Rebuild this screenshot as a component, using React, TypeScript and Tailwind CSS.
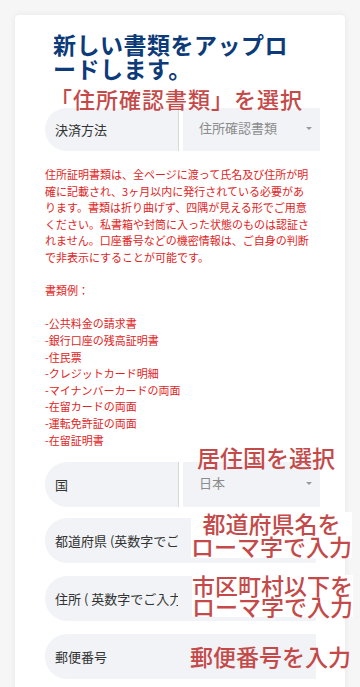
import React from "react";

const font = { fontFamily: '"Noto Sans CJK JP", "Noto Sans", sans-serif' };

function SelectRow({ label, value, h }: { label: string; value: string; h: string }) {
  return (
    <div className={`flex w-[275px] ${h}`}>
      <div className="flex w-[134px] items-center rounded-l-[22px] border-r border-[#d8d8d8] bg-[#f1f3f7] pl-[10px] text-[13px] text-[#333]">
        {label}
      </div>
      <div className="ml-[4px] flex flex-1 items-center justify-between bg-[#f1f3f7] pl-[16px] pr-[8px] text-[13px] text-[#8c8c8c]">
        <span className="-mt-[3px]">{value}</span>
        <span className="-mt-[3px] h-0 w-0 border-l-[3px] border-r-[3px] border-t-[3px] border-l-transparent border-r-transparent border-t-[#9a9a9a]" />
      </div>
    </div>
  );
}

function TextRow({ label }: { label: string }) {
  return (
    <div className="flex h-[45px] w-[271px] rounded-l-[22px] bg-[#f1f3f7]">
      <div className="flex w-[133px] items-center overflow-hidden whitespace-nowrap pl-[10px] text-[13px] text-[#333]">
        {label}
      </div>
    </div>
  );
}

export default function App() {
  const para = [
    "住所証明書類は、全ページに渡って氏名及び住所が明",
    "確に記載され、3ヶ月以内に発行されている必要があ",
    "ります。書類は折り曲げず、四隅が見える形でご用意",
    "ください。私書箱や封筒に入った状態のものは認証さ",
    "れません。口座番号などの機密情報は、ご自身の判断",
    "で非表示にすることが可能です。",
  ];
  const items = [
    "-公共料金の請求書",
    "-銀行口座の残高証明書",
    "-住民票",
    "-クレジットカード明細",
    "-マイナンバーカードの両面",
    "-在留カードの両面",
    "-運転免許証の両面",
    "-在留証明書",
  ];
  return (
    <div className="min-h-screen bg-[#f6f6f7] px-[15px] pt-[15px]" style={font}>
      <div className="relative min-h-[700px] rounded-t-[4px] bg-white pl-[30px] pr-[25px] pt-[17px] shadow-[0_0_6px_rgba(0,0,0,0.07)]">
        <h2 className="ml-[8px] text-[23px] font-bold leading-[24px] tracking-[0.5px] text-[#0d3a78]">
          新しい書類をアップロ
          <br />
          ードします。
        </h2>

        <div className="mt-[28px]">
          <SelectRow label="決済方法" value="住所確認書類" h="h-[43px]" />
        </div>

        <div className="mt-[15px] w-[270px] text-[11px] leading-[16.6px] text-[#e02424]">
          {para.map((l) => (
            <div key={l} className="whitespace-nowrap">{l}</div>
          ))}
          <div className="h-[16.6px]" />
          <div>書類例：</div>
          <div className="h-[16.6px]" />
          {items.map((l) => (
            <div key={l} className="whitespace-nowrap">{l}</div>
          ))}
        </div>

        <div className="mt-[14px]">
          <SelectRow label="国" value="日本" h="h-[45px]" />
        </div>
        <div className="mt-[11px] flex flex-col gap-[13px]">
          <TextRow label="都道府県 (英数字でご入力ください)" />
          <TextRow label="住所 ( 英数字でご入力ください)" />
          <TextRow label="郵便番号" />
        </div>

        {/* annotations */}
        <div className="absolute left-[35px] top-[70px] whitespace-nowrap text-[22px] font-medium leading-[26px] tracking-[1px] text-[#c44a4a]">
          「住所確認書類」を選択
        </div>
        <div className="absolute left-[182px] top-[430px] whitespace-nowrap text-[23px] font-medium leading-[24px] text-[#c44a4a]">
          居住国を選択
        </div>
        <div className="absolute left-[176px] top-[497px] whitespace-nowrap bg-white text-center text-[23px] font-medium leading-[23px] text-[#c44a4a]">
          都道府県名を
          <br />
          ローマ字で入力
        </div>
        <div className="absolute left-[177px] top-[560px] whitespace-nowrap bg-white text-center text-[23px] font-medium leading-[21px] text-[#c44a4a]">
          市区町村以下を
          <br />
          ローマ字で入力
        </div>
        <div className="absolute left-[175px] top-[629px] whitespace-nowrap text-[23px] font-medium leading-[24px] text-[#c44a4a]">
          郵便番号を入力
        </div>
      </div>
    </div>
  );
}
